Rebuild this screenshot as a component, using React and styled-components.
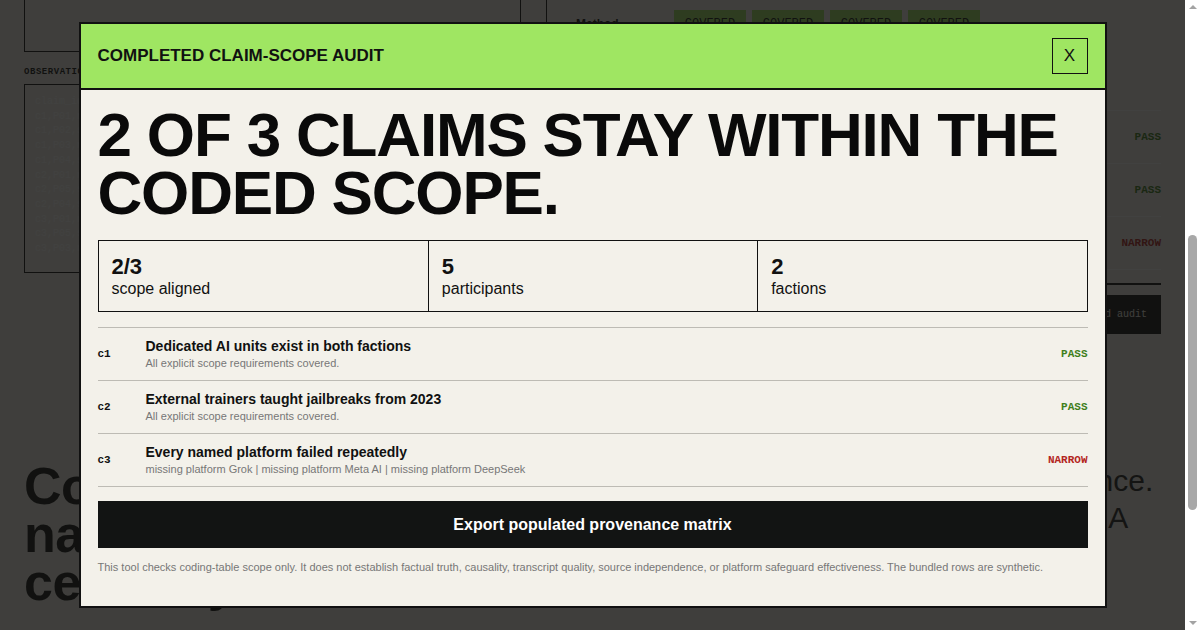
import { useLayoutEffect, useRef, useState } from 'react';
import styled, { createGlobalStyle } from 'styled-components';

const claims = [
  {
    id: 'c1',
    title: 'Dedicated AI units exist in both factions',
    note: 'All explicit scope requirements covered.',
    status: 'PASS',
  },
  {
    id: 'c2',
    title: 'External trainers taught jailbreaks from 2023',
    note: 'All explicit scope requirements covered.',
    status: 'PASS',
  },
  {
    id: 'c3',
    title: 'Every named platform failed repeatedly',
    note: 'missing platform Grok | missing platform Meta AI | missing platform DeepSeek',
    status: 'NARROW',
  },
];

const stats = [
  { value: '2/3', label: 'scope aligned' },
  { value: '5', label: 'participants' },
  { value: '2', label: 'factions' },
];

const observationLines = [
  'claim_id,participant_id,faction,platform,year,note',
  'c1,P01,north,ChatGPT,2023,unit formed',
  'c1,P02,south,Claude,2023,unit formed',
  'c1,P03,north,Gemini,2024,unit formed',
  'c1,P04,south,ChatGPT,2024,unit formed',
  'c2,P01,north,ChatGPT,2023,trainer visit',
  'c2,P05,south,Claude,2023,trainer visit',
  'c2,P04,south,Gemini,2024,trainer visit',
  'c3,P01,north,ChatGPT,2024,refusal bypassed',
  'c3,P05,south,Claude,2024,refusal bypassed',
  'c3,P03,north,Gemini,2024,refusal bypassed',
];

const matrixRows = ['Method', 'Platform', 'Year'];

export default function App() {
  const observationsRef = useRef(null);
  const [thumb, setThumb] = useState({ top: 15, height: 100 });

  useLayoutEffect(() => {
    const box = observationsRef.current;
    if (!box) return;
    const top = box.getBoundingClientRect().top + window.scrollY;
    window.scrollTo(0, top - 84);

    const docHeight = document.documentElement.scrollHeight;
    const viewHeight = window.innerHeight;
    const track = viewHeight - 30;
    const height = Math.max(20, (track * viewHeight) / docHeight);
    const range = Math.max(1, docHeight - viewHeight);
    setThumb({ top: 15 + (window.scrollY / range) * (track - height), height });
  }, []);

  return (
    <>
      <GlobalStyle />
      <Page>
        <Masthead>
          <Eyebrow>CLAIM-SCOPE AUDITOR / FIELD NOTES</Eyebrow>
          <PageTitle>Check each claim against the coded scope.</PageTitle>
          <Lede>
            Paste the claims and the coded observation table. The auditor marks which claims are
            covered by the rows you already have.
          </Lede>
        </Masthead>

        <Workspace>
          <LeftColumn>
            <Field>
              <FieldLabel>CLAIMS</FieldLabel>
              <CodeBox $height={150}>
                c1 | Dedicated AI units exist in both factions{'\n'}
                c2 | External trainers taught jailbreaks from 2023{'\n'}
                c3 | Every named platform failed repeatedly
              </CodeBox>
            </Field>
            <Field>
              <FieldLabel>OBSERVATIONS</FieldLabel>
              <CodeBox ref={observationsRef} $height={189}>
                {observationLines.join('\n')}
              </CodeBox>
            </Field>
          </LeftColumn>

          <RightColumn>
            <MatrixIntro>
              <MatrixTitle>Provenance matrix</MatrixTitle>
              <MatrixText>
                Each cell shows whether a participant row covers the requirement named on the
                left.
              </MatrixText>
            </MatrixIntro>
            <Matrix>
              <MatrixHead>
                <span>requirement</span>
                <span>P01</span>
                <span>P02</span>
                <span>P03</span>
                <span>P04</span>
              </MatrixHead>
              {matrixRows.map((row) => (
                <MatrixRow key={row}>
                  <MatrixLabel>{row}</MatrixLabel>
                  <Chip>COVERED</Chip>
                  <Chip>COVERED</Chip>
                  <Chip>COVERED</Chip>
                  <Chip>COVERED</Chip>
                </MatrixRow>
              ))}
            </Matrix>
            <ResultList>
              {claims.map((claim) => (
                <ResultRow key={claim.id}>
                  <RowId>{claim.id}</RowId>
                  <RowTitle>{claim.title}</RowTitle>
                  <Status $status={claim.status}>{claim.status}</Status>
                </ResultRow>
              ))}
            </ResultList>
            <RunButton>Run populated audit</RunButton>
          </RightColumn>
        </Workspace>

        <Closing>
          <ClosingHeading>Coverage is not narrative certainty.</ClosingHeading>
          <ClosingText>
            This audit reads coverage, not evidence. Every claim is read against the rows. A pass
            means the coded rows match, nothing beyond that.
          </ClosingText>
        </Closing>
      </Page>

      <Overlay>
        <Modal role="dialog" aria-modal="true">
          <ModalHeader>
            <ModalTitle>COMPLETED CLAIM-SCOPE AUDIT</ModalTitle>
            <CloseButton aria-label="Close">X</CloseButton>
          </ModalHeader>
          <ModalBody>
            <Headline>
              2 OF 3 CLAIMS STAY WITHIN THE
              <br />
              CODED SCOPE.
            </Headline>

            <StatGrid>
              {stats.map((stat) => (
                <StatCell key={stat.label}>
                  <StatValue>{stat.value}</StatValue>
                  <StatLabel>{stat.label}</StatLabel>
                </StatCell>
              ))}
            </StatGrid>

            <ClaimList>
              {claims.map((claim) => (
                <ClaimRow key={claim.id}>
                  <ClaimId>{claim.id}</ClaimId>
                  <ClaimText>
                    <ClaimTitle>{claim.title}</ClaimTitle>
                    <ClaimNote>{claim.note}</ClaimNote>
                  </ClaimText>
                  <Status $status={claim.status}>{claim.status}</Status>
                </ClaimRow>
              ))}
            </ClaimList>

            <ExportButton>Export populated provenance matrix</ExportButton>
            <Disclaimer>
              This tool checks coding-table scope only. It does not establish factual truth,
              causality, transcript quality, source independence, or platform safeguard
              effectiveness. The bundled rows are synthetic.
            </Disclaimer>
          </ModalBody>
        </Modal>
      </Overlay>

      <ScrollTrack aria-hidden="true">
        <ScrollArrow $dir="up" />
        <ScrollThumb style={{ top: thumb.top, height: thumb.height }} />
        <ScrollArrow $dir="down" />
      </ScrollTrack>
    </>
  );
}

const GlobalStyle = createGlobalStyle`
  * {
    box-sizing: border-box;
  }

  html,
  body {
    margin: 0;
    padding: 0;
  }

  body {
    background: #f3f1ea;
    color: #111;
    font-family: "Liberation Sans", Arial, sans-serif;
  }
`;

/* ---------- page behind the dialog ---------- */

const Page = styled.main`
  min-height: 1375px;
  margin-right: 15px;
  padding: 24px 24px 80px;
`;

const Masthead = styled.header`
  display: flex;
  flex-direction: column;
  gap: 18px;
  height: 324px;
  padding: 48px 0 0;
  border-bottom: 2px solid #111;
`;

const Eyebrow = styled.div`
  font-family: "Liberation Mono", monospace;
  font-size: 11px;
  font-weight: bold;
  letter-spacing: 0.12em;
`;

const PageTitle = styled.h1`
  margin: 0;
  max-width: 900px;
  font-size: 56px;
  line-height: 1;
  letter-spacing: -0.03em;
`;

const Lede = styled.p`
  margin: 0;
  max-width: 640px;
  font-size: 18px;
  line-height: 1.45;
  color: #444;
`;

const Workspace = styled.section`
  display: grid;
  grid-template-columns: 497px 1fr;
  column-gap: 25px;
  margin-top: 40px;
`;

const LeftColumn = styled.div`
  display: flex;
  flex-direction: column;
  gap: 14px;
`;

const Field = styled.div`
  display: flex;
  flex-direction: column;
  gap: 6px;
`;

const FieldLabel = styled.div`
  font-family: "Liberation Mono", monospace;
  font-size: 9px;
  font-weight: bold;
  line-height: 12px;
  letter-spacing: 0.06em;
`;

const CodeBox = styled.pre`
  margin: 0;
  height: ${(p) => p.$height}px;
  padding: 10px;
  border: 1px solid #111;
  background: transparent;
  color: #ffffff;
  font-family: "Liberation Mono", monospace;
  font-size: 10px;
  line-height: 14.7px;
  overflow: hidden;
  white-space: pre;
`;

const RightColumn = styled.div`
  display: flex;
  flex-direction: column;
  padding-left: 29px;
  border-left: 1px solid #111;
`;

const MatrixIntro = styled.div`
  height: 96px;
`;

const MatrixTitle = styled.h3`
  margin: 0 0 8px;
  font-size: 20px;
  line-height: 24px;
`;

const MatrixText = styled.p`
  margin: 0;
  max-width: 420px;
  font-size: 12px;
  line-height: 16px;
  color: #555;
`;

const Matrix = styled.div`
  display: flex;
  flex-direction: column;
`;

const MatrixHead = styled.div`
  display: grid;
  grid-template-columns: 92px repeat(4, 72px);
  column-gap: 6px;
  height: 28px;
  align-items: center;
  font-family: "Liberation Mono", monospace;
  font-size: 10px;
  font-weight: bold;
`;

const MatrixRow = styled.div`
  display: grid;
  grid-template-columns: 92px repeat(4, 72px);
  column-gap: 6px;
  height: 32px;
  align-items: start;
  padding-top: 2px;
`;

const MatrixLabel = styled.span`
  padding-top: 7px;
  font-size: 12px;
  font-weight: bold;
  white-space: nowrap;
  overflow: hidden;
`;

const Chip = styled.span`
  display: flex;
  justify-content: center;
  padding: 7px 0;
  background: #9fe662;
  font-family: "Liberation Mono", monospace;
  font-size: 12px;
  line-height: 14px;
`;

const ResultList = styled.div`
  margin-top: 6px;
  border-top: 1px solid #ffffff;
  border-bottom: 2px solid #111;
  padding-bottom: 13px;
`;

const ResultRow = styled.div`
  display: grid;
  grid-template-columns: 48px 1fr auto;
  align-items: center;
  height: 53px;
  border-bottom: 1px solid #ffffff;
`;

const RowId = styled.span`
  font-family: "Liberation Mono", monospace;
  font-size: 11px;
  font-weight: bold;
`;

const RowTitle = styled.span`
  font-size: 14px;
  font-weight: bold;
`;

const RunButton = styled.button`
  margin-top: 10px;
  height: 39px;
  padding: 0 14px;
  border: none;
  background: #111;
  color: #f3f1ea;
  font-family: "Liberation Mono", monospace;
  font-size: 10px;
  text-align: right;
`;

const Closing = styled.section`
  display: grid;
  grid-template-columns: 1fr 1fr;
  column-gap: 41px;
  margin-top: 128px;
`;

const ClosingHeading = styled.h2`
  margin: 0;
  max-width: 420px;
  font-size: 52px;
  line-height: 48px;
  letter-spacing: -0.01em;
`;

const ClosingText = styled.p`
  margin: 0;
  font-size: 30px;
  line-height: 37px;
  color: #222;
`;

/* ---------- window scrollbar ---------- */

const ScrollTrack = styled.div`
  position: fixed;
  top: 0;
  right: 0;
  bottom: 0;
  width: 15px;
  background: #ffffff;
`;

const ScrollArrow = styled.span`
  position: absolute;
  left: 50%;
  width: 0;
  height: 0;
  transform: translateX(-50%);
  border-left: 4px solid transparent;
  border-right: 4px solid transparent;
  ${(p) =>
    p.$dir === 'up'
      ? 'top: 5px; border-bottom: 4px solid #a3a3a3;'
      : 'bottom: 5px; border-top: 4px solid #a3a3a3;'}
`;

const ScrollThumb = styled.div`
  position: absolute;
  left: 3px;
  right: 3px;
  border-radius: 5px;
  background: #a8a8a8;
`;

/* ---------- dialog ---------- */

const Overlay = styled.div`
  position: fixed;
  top: 0;
  left: 0;
  right: 15px;
  bottom: 0;
  display: flex;
  align-items: center;
  justify-content: center;
  background: rgba(17, 17, 16, 0.8);
`;

const Modal = styled.div`
  width: 1028px;
  background: #f3f1ea;
  border: 2px solid #111;
`;

const ModalHeader = styled.div`
  display: flex;
  align-items: center;
  justify-content: space-between;
  height: 66px;
  padding: 0 17px;
  background: #9fe662;
  border-bottom: 2px solid #111;
`;

const ModalTitle = styled.h2`
  margin: 0;
  font-size: 17px;
  font-weight: bold;
`;

const CloseButton = styled.button`
  width: 36px;
  height: 36px;
  padding: 0;
  border: 1px solid #111;
  background: transparent;
  color: #111;
  font-family: "Liberation Sans", Arial, sans-serif;
  font-size: 17px;
  cursor: pointer;
`;

const ModalBody = styled.div`
  padding: 16px 17px 31px;
`;

const Headline = styled.h1`
  margin: 0 0 18px;
  font-size: 62px;
  font-weight: bold;
  line-height: 58px;
  letter-spacing: -0.019em;
  color: #0a0a0a;
`;

const StatGrid = styled.div`
  display: grid;
  grid-template-columns: repeat(3, 1fr);
  border: 1px solid #111;
`;

const StatCell = styled.div`
  display: flex;
  flex-direction: column;
  padding: 13px;

  & + & {
    border-left: 1px solid #111;
  }
`;

const StatValue = styled.div`
  font-size: 22px;
  font-weight: bold;
  line-height: 25px;
`;

const StatLabel = styled.div`
  font-size: 16px;
  line-height: 19px;
`;

const ClaimList = styled.div`
  margin-top: 15px;
  border-top: 1px solid #bdbbb4;
`;

const ClaimRow = styled.div`
  display: grid;
  grid-template-columns: 48px 1fr auto;
  align-items: center;
  height: 53px;
  border-bottom: 1px solid #bdbbb4;
`;

const ClaimId = styled.span`
  font-family: "Liberation Mono", monospace;
  font-size: 11px;
  font-weight: bold;
`;

const ClaimText = styled.div`
  display: flex;
  flex-direction: column;
  gap: 2px;
`;

const ClaimTitle = styled.div`
  font-size: 14px;
  font-weight: bold;
  line-height: 17px;
`;

const ClaimNote = styled.div`
  font-size: 11px;
  line-height: 13px;
  color: #777;
`;

const Status = styled.span`
  font-family: "Liberation Mono", monospace;
  font-size: 11px;
  font-weight: bold;
  color: ${(p) => (p.$status === 'PASS' ? '#3f7f1c' : '#b3261e')};
`;

const ExportButton = styled.button`
  display: block;
  width: 100%;
  height: 47px;
  margin-top: 14px;
  border: none;
  background: #121413;
  color: #fff;
  font-family: "Liberation Sans", Arial, sans-serif;
  font-size: 16px;
  font-weight: bold;
  cursor: pointer;
`;

const Disclaimer = styled.p`
  margin: 12px 0 0;
  font-size: 11px;
  line-height: 15px;
  color: #777;
`;
